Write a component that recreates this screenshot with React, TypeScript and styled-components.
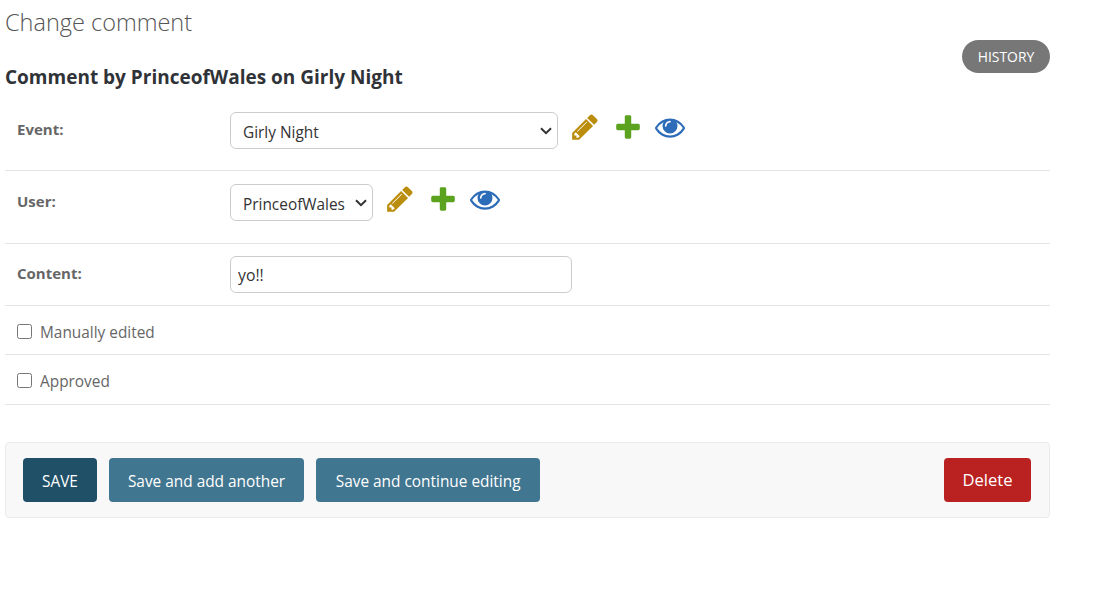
import React from "react";
import styled, {createGlobalStyle} from "styled-components";

const GlobalStyle = createGlobalStyle`
    html, body {
        margin: 0;
        padding: 0;
        background: #fff;
        font-family: "Open Sans", "Noto Sans", sans-serif;
    }
`

const PENCIL = "M491 1536l91-91-235-235-91 91v107h128v128h107zm523-928q0-22-22-22-10 0-17 7l-542 542q-7 7-7 17 0 22 22 22 10 0 17-7l542-542q7-7 7-17zm-54-192l416 416-832 832h-416v-416zm683 96q0 53-37 90l-166 166-416-416 166-165q36-38 90-38 53 0 91 38l235 234q37 39 37 91z"
const PLUS = "M1600 796v192q0 40-28 68t-68 28h-416v416q0 40-28 68t-68 28h-192q-40 0-68-28t-28-68v-416h-416q-40 0-68-28t-28-68v-192q0-40 28-68t68-28h416v-416q0-40 28-68t68-28h192q40 0 68 28t28 68v416h416q40 0 68 28t28 68z"
const EYE = "M1664 960q-152-236-381-353 61 104 61 225 0 185-131.500 316.500t-316.500 131.500-316.500-131.500-131.500-316.500q0-121 61-225-229 117-381 353 133 205 333.500 326.500t434.500 121.500 434.500-121.500 333.500-326.500zm-720-384q0-20-14-34t-34-14q-125 0-214.500 89.500t-89.500 214.500q0 20 14 34t34 14 34-14 14-34q0-86 61-147t147-61q20 0 34-14t14-34zm848 384q0 34-20 69-140 230-376.500 368.500t-499.500 138.500-499.500-139-376.500-368q-20-35-20-69t20-69q140-229 376.500-368t499.500-139 499.500 139 376.500 368q20 35 20 69z"

const CHEVRON = "data:image/svg+xml,%3Csvg xmlns='http://www.w3.org/2000/svg' width='12' height='8'%3E%3Cpath d='M1 1.200l5 5 5-5' fill='none' stroke='%23333' stroke-width='2'/%3E%3C/svg%3E"

const RelatedIcons = () => (
    <IconGroup>
        <Icon viewBox="0 0 1792 1792"><path fill="#bb8d0c" d={PENCIL}/></Icon>
        <Icon viewBox="0 0 1792 1792"><path fill="#5ba21f" d={PLUS}/></Icon>
        <Icon viewBox="0 0 1792 1792"><path fill="#2d6cb8" d={EYE}/></Icon>
    </IconGroup>
)

export default function App() {
    return (
        <Page>
            <GlobalStyle/>
            <Title>Change comment</Title>
            <HeadRow>
                <ObjectName>Comment by PrinceofWales on Girly Night</ObjectName>
                <HistoryLink>HISTORY</HistoryLink>
            </HeadRow>
            <Form>
                <EventRow>
                    <FieldLabel>Event:</FieldLabel>
                    <Select $width={328} defaultValue="Girly Night">
                        <option>Girly Night</option>
                    </Select>
                    <RelatedIcons/>
                </EventRow>
                <UserRow>
                    <FieldLabel>User:</FieldLabel>
                    <Select $width={143} defaultValue="PrinceofWales">
                        <option>PrinceofWales</option>
                    </Select>
                    <RelatedIcons/>
                </UserRow>
                <ContentRow>
                    <FieldLabel>Content:</FieldLabel>
                    <TextInput defaultValue="yo!!"/>
                </ContentRow>
                <ManualRow>
                    <Checkbox type="checkbox"/>
                    <CheckLabel>Manually edited</CheckLabel>
                </ManualRow>
                <ApprovedRow>
                    <Checkbox type="checkbox"/>
                    <CheckLabel>Approved</CheckLabel>
                </ApprovedRow>
            </Form>
            <SubmitRow>
                <PrimaryButton>SAVE</PrimaryButton>
                <SecondaryButton>Save and add another</SecondaryButton>
                <ContinueButton>Save and continue editing</ContinueButton>
                <DeleteButton>Delete</DeleteButton>
            </SubmitRow>
        </Page>
    )
}

const Page = styled.div`
    width: 1045px;
    height: 592px;
    margin-left: 5px;
    color: #333;
    overflow: hidden;
`

const Title = styled.h1`
    margin: 0;
    padding-top: 7px;
    height: 33px;
    font-size: 23.5px;
    line-height: 30px;
    font-weight: 300;
    color: #555;
`

const HeadRow = styled.div`
    display: flex;
    justify-content: space-between;
    height: 72px;
`

const ObjectName = styled.h2`
    margin: 0;
    padding-top: 25px;
    font-size: 19px;
    line-height: 24px;
    font-weight: 700;
    color: #2f3338;
`

const HistoryLink = styled.a`
    align-self: flex-start;
    display: flex;
    align-items: center;
    justify-content: center;
    width: 88px;
    height: 33px;
    border-radius: 17px;
    background: #777;
    color: #fff;
    font-size: 13.9px;
`

const Form = styled.div`
    display: flex;
    flex-direction: column;
`

const Row = styled.div`
    display: flex;
    box-sizing: border-box;
    align-items: flex-start;
    padding-left: 12px;
    border-bottom: 1px solid #e4e4e4;
`

const EventRow = styled(Row)`
    height: 59px;
`

const UserRow = styled(Row)`
    height: 73px;
    padding-top: 13px;
`

const ContentRow = styled(Row)`
    height: 62px;
    padding-top: 12px;
`

const ManualRow = styled(Row)`
    height: 49px;
    align-items: center;
    padding-top: 2px;
`

const ApprovedRow = styled(Row)`
    height: 50px;
    align-items: center;
    padding-top: 1px;
`

const FieldLabel = styled.label`
    width: 213px;
    flex: none;
    padding-top: 7px;
    font-size: 15px;
    line-height: 20px;
    font-weight: 700;
    color: #666;
`

const Select = styled.select<{ $width: number }>`
    box-sizing: border-box;
    appearance: none;
    width: ${props => props.$width}px;
    height: 37px;
    padding: 4px 8px 0 12px;
    border: 1px solid #ccc;
    border-radius: 6px;
    background: #fff url("${CHEVRON}") no-repeat right 5px center;
    color: #333;
    font-family: inherit;
    font-size: 15.4px;
`

const TextInput = styled.input`
    box-sizing: border-box;
    width: 342px;
    height: 37px;
    padding: 0 7px;
    border: 1px solid #ccc;
    border-radius: 6px;
    color: #333;
    font-family: inherit;
    font-size: 15.8px;
    outline: none;
`

const IconGroup = styled.div`
    display: flex;
    gap: 13px;
    margin-left: 12px;
`

const Icon = styled.svg`
    display: block;
    width: 30px;
    height: 30px;

    &:last-child {
        margin-left: -1px;
    }
`

const Checkbox = styled.input`
    width: 15px;
    height: 15px;
    margin: 0 8px 0 0;
`

const CheckLabel = styled.label`
    padding-top: 2px;
    font-size: 15.4px;
    color: #666;
`

const SubmitRow = styled.div`
    display: flex;
    box-sizing: border-box;
    align-items: center;
    gap: 12px;
    height: 76px;
    margin-top: 37px;
    padding: 0 18px 0 17px;
    background: #f8f8f8;
    border: 1px solid #eaeaea;
    border-radius: 4px;
`

const Button = styled.button`
    height: 44px;
    padding: 2px 19px 0;
    border: none;
    border-radius: 4px;
    color: #fff;
    font-family: inherit;
    font-size: 15.4px;
`

const PrimaryButton = styled(Button)`
    background: #205067;
`

const SecondaryButton = styled(Button)`
    background: #417690;
`

const ContinueButton = styled(SecondaryButton)`
    width: 224px;
    padding: 2px 0 0;
`

const DeleteButton = styled(Button)`
    margin-left: auto;
    padding: 0 18.500px 1px;
    background: #ba2121;
    font-size: 16.6px;
`
